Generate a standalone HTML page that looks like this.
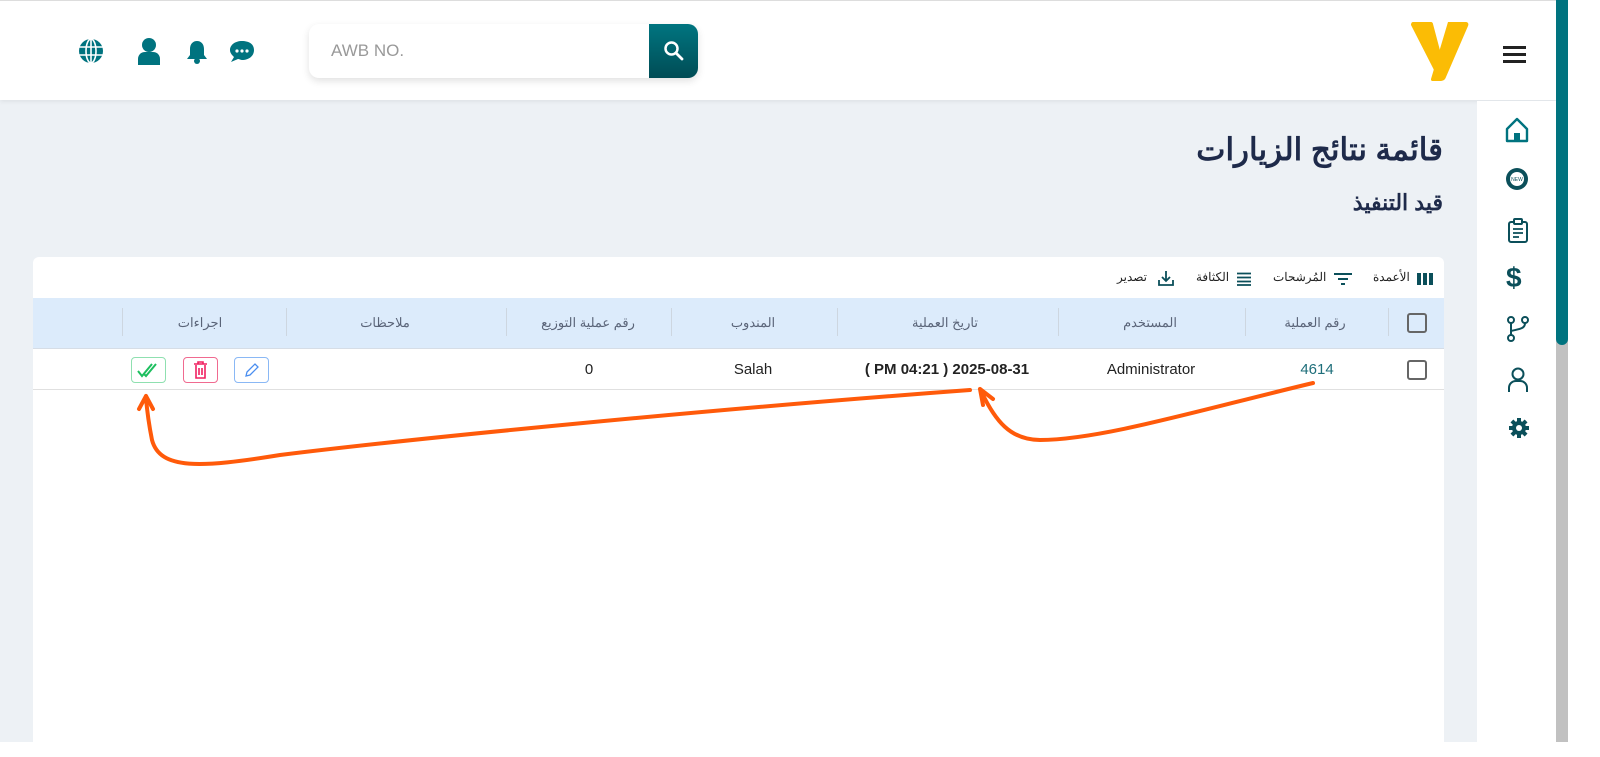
<!DOCTYPE html>
<html><head><meta charset="utf-8"><style>
*{box-sizing:border-box;margin:0;padding:0}
body{width:1600px;height:742px;overflow:hidden;background:#fff;font-family:"Liberation Sans","Noto Sans CJK SC",sans-serif;position:relative}
.main{position:absolute;left:0;top:0;width:1556px;height:742px;background:#edf1f5}
.top{position:absolute;left:0;top:0;width:1556px;height:100px;background:#fff;border-top:1px solid #ddd;box-shadow:0 2px 4px rgba(0,0,0,.06)}
.side{position:absolute;left:1477px;top:101px;width:79px;height:641px;background:#fff}
.sb{position:absolute;left:1556px;top:0;width:12px;height:742px;background:#c1c1c1}
.sb div{width:12px;height:345px;background:#00737f;border-radius:0 0 6px 6px}
.search{position:absolute;left:309px;top:24px;width:389px;height:54px;background:#fff;border-radius:10px;box-shadow:0 3px 8px rgba(0,0,0,.12)}
.search span{position:absolute;left:22px;top:17px;font-size:17px;color:#999}
.sbtn{position:absolute;right:0;top:0;width:49px;height:54px;border-radius:0 10px 10px 0;background:linear-gradient(#007580,#004c55)}
.card{position:absolute;left:33px;top:257px;width:1411px;height:500px;background:#fff;border-radius:6px}
.t{position:absolute;white-space:nowrap;transform:translateX(-50%)}
.h{font-size:13px;color:#5a6478;top:315px}
.r{font-size:15px;color:#222;top:361px}
.sep{position:absolute;top:308px;width:1px;height:28px;background:#cdd6e0}
.cb{position:absolute;width:20px;height:20px;border:2px solid #666;border-radius:3px;left:1407px}
.btn{position:absolute;top:357px;width:35px;height:26px;border-radius:4px;border:1px solid}
</style></head><body>
<div class="main"></div>
<div class="top"></div>
<div class="side"></div>
<div class="sb"><div></div></div>

<svg style="position:absolute;left:78px;top:38px" width="26" height="26" viewBox="0 0 26 26"><circle cx="13" cy="13" r="12" fill="#00737f"/><g stroke="#fff" stroke-width="1.6" fill="none"><ellipse cx="13" cy="13" rx="5" ry="12"/><line x1="13" y1="1" x2="13" y2="25"/><line x1="1" y1="9" x2="25" y2="9"/><line x1="1" y1="17" x2="25" y2="17"/></g></svg>
<svg style="position:absolute;left:136px;top:37px" width="26" height="28" viewBox="0 0 26 28"><circle cx="13" cy="8" r="7" fill="#00737f"/><path d="M2 28v-6c0-4 3-7 7-7h8c4 0 7 3 7 7v6z" fill="#00737f"/></svg>
<svg style="position:absolute;left:186px;top:39px" width="22" height="26" viewBox="0 0 22 26"><path d="M11 2c-4 0-7 3-7 8v6l-3 4h20l-3-4v-6c0-5-3-8-7-8z" fill="#00737f"/><circle cx="11" cy="22" r="3" fill="#00737f"/></svg>
<svg style="position:absolute;left:229px;top:40px" width="26" height="24" viewBox="0 0 26 24"><path d="M13 1C6 1 1 5 1 10c0 3 2 5 4 7l-3 5 7-3c1 0 3 1 4 1 7 0 12-4 12-10S20 1 13 1z" fill="#00737f"/><circle cx="8" cy="11" r="1.6" fill="#fff"/><circle cx="13" cy="11" r="1.6" fill="#fff"/><circle cx="18" cy="11" r="1.6" fill="#fff"/></svg>

<div class="search"><span>AWB NO.</span><div class="sbtn"><svg style="position:absolute;left:14px;top:16px" width="22" height="22" viewBox="0 0 22 22"><circle cx="8.5" cy="8.5" r="6" stroke="#fff" stroke-width="2.5" fill="none"/><line x1="13" y1="13" x2="19" y2="19" stroke="#fff" stroke-width="2.8" stroke-linecap="round"/></svg></div></div>

<svg style="position:absolute;left:1410px;top:21px" width="60" height="62" viewBox="0 0 60 62"><path d="M3 1h18c1 0 2 1 2 2l9 34-6 12c-1 1-2 1-2 0L1 4c0-2 1-3 2-3z" fill="#fbbc05"/><path d="M38 1h18c2 0 3 2 2 4L36 56c-1 3-3 4-6 4h-7c-2 0-2-1-2-2z" fill="#fbbc05"/></svg>
<svg style="position:absolute;left:1503px;top:45px" width="24" height="20"><rect y="1" width="23" height="3" fill="#222"/><rect y="8" width="23" height="3" fill="#222"/><rect y="15" width="23" height="3" fill="#222"/></svg>

<svg style="position:absolute;left:1505px;top:117px" width="24" height="26" viewBox="0 0 24 26"><path d="M2 12L12 2l10 10v12H2z" stroke="#00737f" stroke-width="2.4" fill="none" stroke-linejoin="round"/><rect x="9" y="16" width="6" height="8" fill="#00737f"/></svg>
<svg style="position:absolute;left:1505px;top:167px" width="24" height="24" viewBox="0 0 24 24"><circle cx="12" cy="12" r="11" fill="#0b4f5a"/><circle cx="12" cy="12" r="7" fill="#fff"/><text x="12" y="14" font-size="5" text-anchor="middle" fill="#0b4f5a">NEW</text></svg>
<svg style="position:absolute;left:1507px;top:218px" width="22" height="26" viewBox="0 0 22 26"><rect x="2" y="4" width="18" height="20" rx="2" stroke="#0b4f5a" stroke-width="2" fill="none"/><rect x="7" y="1" width="8" height="5" rx="1" fill="#fff" stroke="#0b4f5a" stroke-width="2"/><path d="M6 11h10M6 15h10M6 19h6" stroke="#0b4f5a" stroke-width="1.8"/></svg>
<div style="position:absolute;left:1506px;top:262px;font-size:28px;font-weight:bold;color:#0b4f5a">$</div>
<svg style="position:absolute;left:1506px;top:316px" width="24" height="26" viewBox="0 0 24 26"><g stroke="#0b4f5a" stroke-width="2" fill="none"><circle cx="5" cy="4" r="3"/><circle cx="19" cy="4" r="3"/><circle cx="5" cy="22" r="3"/><path d="M5 7v12M19 7c0 6-6 6-14 8"/></g></svg>
<svg style="position:absolute;left:1507px;top:367px" width="22" height="26" viewBox="0 0 22 26"><g stroke="#0b4f5a" stroke-width="2" fill="none"><circle cx="11" cy="7" r="5.5"/><path d="M2 25v-4c0-4 3-7 7-7h4c4 0 7 3 7 7v4"/></g></svg>
<svg style="position:absolute;left:1508px;top:417px" width="22" height="22" viewBox="0 0 22 22"><g fill="#0b4f5a"><circle cx="11" cy="11" r="7"/><rect x="9" y="1" width="4" height="20"/><rect x="1" y="9" width="20" height="4"/><rect x="9" y="1" width="4" height="20" transform="rotate(45 11 11)"/><rect x="9" y="1" width="4" height="20" transform="rotate(-45 11 11)"/></g><circle cx="11" cy="11" r="3" fill="#fff"/></svg>

<div style="position:absolute;right:157px;top:132px;font-size:31px;font-weight:bold;color:#1e2a4a;direction:rtl">قائمة نتائج الزيارات</div>
<div style="position:absolute;right:157px;top:190px;font-size:22px;font-weight:bold;color:#1e2a4a;direction:rtl">قيد التنفيذ</div>

<div class="card"></div>
<svg style="position:absolute;left:1417px;top:273px" width="17" height="12"><rect x="0" y="0" width="4" height="12" fill="#0b4f5a"/><rect x="6" y="0" width="4" height="12" fill="#0b4f5a"/><rect x="12" y="0" width="4" height="12" fill="#0b4f5a"/></svg>
<div style="position:absolute;left:1373px;top:270px;font-size:12px;color:#222">الأعمدة</div>
<svg style="position:absolute;left:1333px;top:272px" width="20" height="14"><path d="M1 2h18M5 7h10M8 12h4" stroke="#0b4f5a" stroke-width="2"/></svg>
<div style="position:absolute;left:1273px;top:270px;font-size:12px;color:#222">المُرشحات</div>
<svg style="position:absolute;left:1237px;top:272px" width="14" height="14"><path d="M0 1.5h14M0 5.5h14M0 9.5h14M0 13h14" stroke="#0b4f5a" stroke-width="1.8"/></svg>
<div style="position:absolute;left:1196px;top:270px;font-size:12px;color:#222">الكثافة</div>
<svg style="position:absolute;left:1158px;top:270px" width="16" height="16"><path d="M8 1v10M4 7l4 4 4-4M1 10v5h14v-5" stroke="#0b4f5a" stroke-width="1.8" fill="none"/></svg>
<div style="position:absolute;left:1117px;top:270px;font-size:12px;color:#222">تصدير</div>

<div style="position:absolute;left:33px;top:298px;width:1411px;height:51px;background:#dcebfb;border-bottom:1px solid #d6dde6"></div>
<div style="position:absolute;left:33px;top:389px;width:1411px;height:1px;background:#e0e0e0"></div>
<div class="sep" style="left:1388px"></div><div class="sep" style="left:1245px"></div><div class="sep" style="left:1058px"></div><div class="sep" style="left:837px"></div><div class="sep" style="left:671px"></div><div class="sep" style="left:506px"></div><div class="sep" style="left:286px"></div><div class="sep" style="left:122px"></div>
<div class="cb" style="top:313px"></div><div class="cb" style="top:360px"></div>
<div class="t h" style="left:1315px">رقم العملية</div>
<div class="t h" style="left:1150px">المستخدم</div>
<div class="t h" style="left:945px">تاريخ العملية</div>
<div class="t h" style="left:753px">المندوب</div>
<div class="t h" style="left:588px">رقم عملية التوزيع</div>
<div class="t h" style="left:385px">ملاحظات</div>
<div class="t h" style="left:200px">اجراءات</div>
<div class="t r" style="left:1317px;color:#1e6e7a">4614</div>
<div class="t r" style="left:1151px">Administrator</div>
<div class="t r" style="left:947px;font-weight:bold">( PM 04:21 ) 2025-08-31</div>
<div class="t r" style="left:753px">Salah</div>
<div class="t r" style="left:589px">0</div>
<div class="btn" style="left:131px;border-color:#8fe0b0"><svg width="33" height="24" viewBox="0 0 33 24"><path d="M6 13l4 5 10-12M12 16l2 2 10-12" stroke="#1dbf5f" stroke-width="2" fill="none"/></svg></div>
<div class="btn" style="left:183px;border-color:#f06a90"><svg width="33" height="24" viewBox="0 0 33 24"><path d="M10 6h13M14 6V4h5v2M12 7v13h9V7M15 10v7M18 10v7" stroke="#f02060" stroke-width="1.6" fill="none"/></svg></div>
<div class="btn" style="left:234px;border-color:#8ab8f5"><svg width="33" height="24" viewBox="0 0 33 24"><path d="M11 18l1-4 8-8 3 3-8 8z" stroke="#4a8ef0" stroke-width="1.3" fill="none"/></svg></div>

<svg style="position:absolute;left:0;top:0" width="1600" height="742"><g stroke="#ff5a0a" stroke-width="4" fill="none" stroke-linecap="round" stroke-linejoin="round">
<path d="M1313 383C1200 410 1100 440 1040 440C1010 440 995 420 982 393"/><path d="M980 389l3 16M980 389l13 10"/>
<path d="M970 390C700 410 400 440 280 455C200 468 160 470 152 440C148 420 147 410 146 398"/><path d="M146 396l-7 13M146 396l7 13"/>
</g></svg>
</body></html>
